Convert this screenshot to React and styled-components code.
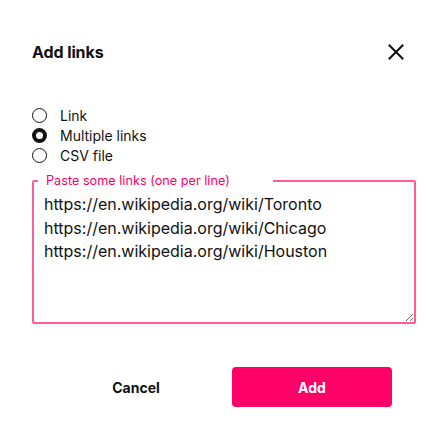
import React, { useState } from 'react';
import styled, { createGlobalStyle } from 'styled-components';

const GlobalStyle = createGlobalStyle`
    body {
        margin: 0;
        background: #ffffff;
        font-family: Inter, "Noto Sans", sans-serif;
        color: #111111;
    }
`;

const Dialog = styled.div`
    width: 448px;
    height: 436px;
    box-sizing: border-box;
    padding: 40px 32px 0 32px;
    display: flex;
    flex-direction: column;
`;

const Header = styled.div`
    display: flex;
    align-items: center;
    justify-content: space-between;
    height: 24px;
`;

const Title = styled.h2`
    margin: 0;
    font-size: 16px;
    font-weight: 700;
    letter-spacing: -0.1px;
`;

const CloseButton = styled.button`
    border: none;
    background: none;
    padding: 0;
    margin-right: 12px;
    width: 16px;
    height: 16px;
    display: flex;
    cursor: pointer;
`;

const RadioGroup = styled.div`
    display: flex;
    flex-direction: column;
    margin-top: 41px;
`;

const RadioRow = styled.label`
    display: flex;
    align-items: center;
    height: 20px;
    gap: 13px;
    font-size: 14px;
    cursor: pointer;
`;

const RadioDot = styled.span`
    width: 15px;
    height: 15px;
    box-sizing: border-box;
    border-radius: 50%;
    border: ${props => (props.checked ? '4.5px' : '1.5px')} solid #111111;
    background: #ffffff;
`;

const Field = styled.fieldset`
    margin: 9px 0 0 0;
    padding: 0;
    border: 2px solid #ff5c9c;
    border-radius: 2px;
    display: flex;
`;

const Legend = styled.legend`
    margin-left: 4px;
    padding: 0 43px 0 8px;
    font-size: 12.7px;
    line-height: 14px;
    color: #ff0066;
`;

const LinksInput = styled.textarea`
    flex: 1;
    height: 134px;
    box-sizing: border-box;
    border: none;
    outline: none;
    padding: 5px 10px;
    font-family: Inter, "Noto Sans", sans-serif;
    font-size: 16px;
    line-height: 23.5px;
    color: #111111;
    background: transparent;
`;

const Actions = styled.div`
    display: flex;
    justify-content: center;
    gap: 16px;
    margin-top: 43px;
`;

const ActionButton = styled.button`
    width: 160px;
    height: 40px;
    border: none;
    border-radius: 4px;
    font-family: Inter, "Noto Sans", sans-serif;
    font-size: 14px;
    font-weight: 700;
    cursor: pointer;
    background: ${props => (props.primary ? '#ff0066' : 'transparent')};
    color: ${props => (props.primary ? '#ffffff' : '#111111')};
`;

const options = ['Link', 'Multiple links', 'CSV file'];

export default function App() {
    const [mode, setMode] = useState('Multiple links');
    const [links, setLinks] = useState(
        'https://en.wikipedia.org/wiki/Toronto\nhttps://en.wikipedia.org/wiki/Chicago\nhttps://en.wikipedia.org/wiki/Houston'
    );

    return (
        <Dialog>
            <GlobalStyle />
            <Header>
                <Title>Add links</Title>
                <CloseButton aria-label='Close'>
                    <svg width='16' height='16' viewBox='0 0 16 16'>
                        <path d='M1.5 1.5 L14.5 14.5 M14.5 1.5 L1.5 14.5' stroke='#111' strokeWidth='2' strokeLinecap='square' />
                    </svg>
                </CloseButton>
            </Header>
            <RadioGroup>
                {options.map(option => (
                    <RadioRow key={option} onClick={() => setMode(option)}>
                        <RadioDot checked={mode === option} />
                        {option}
                    </RadioRow>
                ))}
            </RadioGroup>
            <Field>
                <Legend>Paste some links (one per line)</Legend>
                <LinksInput value={links} onChange={e => setLinks(e.target.value)} />
            </Field>
            <Actions>
                <ActionButton>Cancel</ActionButton>
                <ActionButton primary>Add</ActionButton>
            </Actions>
        </Dialog>
    );
}
